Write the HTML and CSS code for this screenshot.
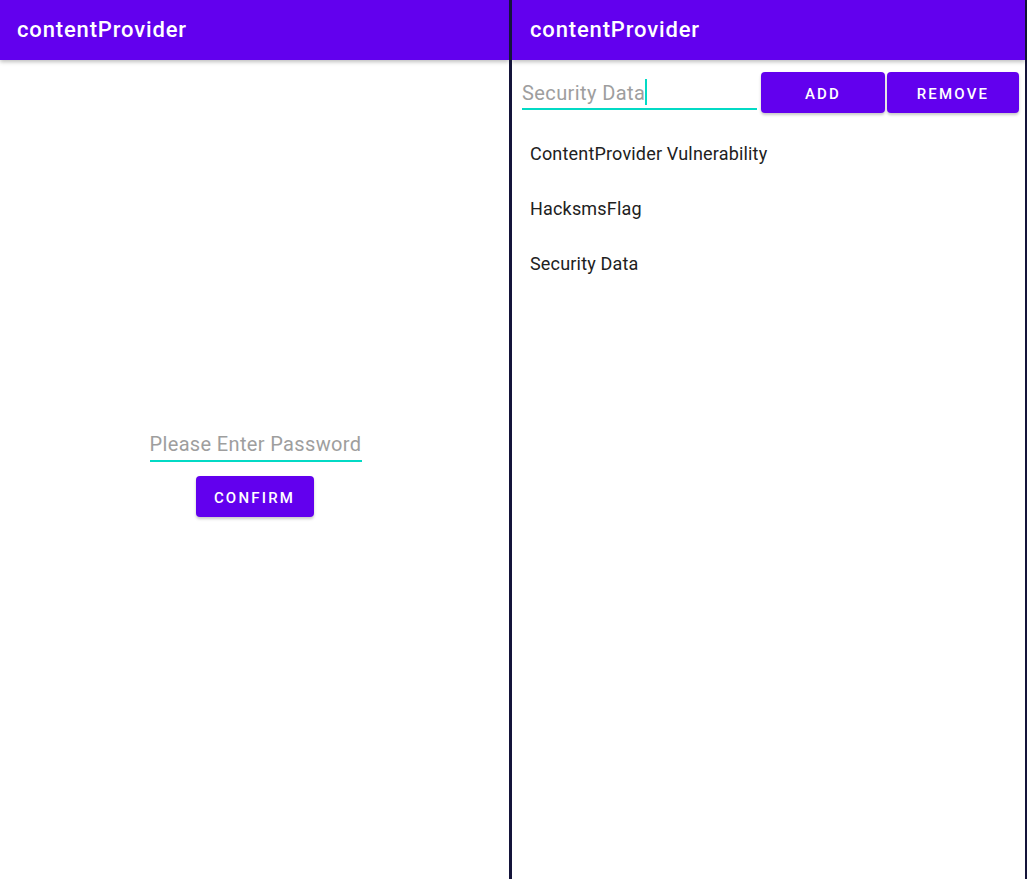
FILE: index.html
```html
<!DOCTYPE html>
<html lang="en">
<head>
  <meta charset="UTF-8" />
  <meta name="viewport" content="width=device-width, initial-scale=1" />
  <title>contentProvider</title>
  <link rel="stylesheet" href="styles.css">
</head>
<body>

<div class="screens">
  <section class="screen login">
    <header class="appbar">
      <h1>contentProvider</h1>
    </header>
    <main class="login-body">
      <div class="field password-field">
        <input type="password" placeholder="Please Enter Password">
      </div>
      <button class="btn confirm-btn">Confirm</button>
    </main>
  </section>

  <div class="divider"></div>

  <section class="screen data">
    <header class="appbar">
      <h1>contentProvider</h1>
    </header>
    <main class="data-body">
      <div class="toolbar">
        <div class="field data-field">
          <span class="hint">Security Data</span><span class="caret"></span>
        </div>
        <button class="btn add-btn">Add</button>
        <button class="btn remove-btn">Remove</button>
      </div>
      <ul class="records">
        <li>ContentProvider Vulnerability</li>
        <li>HacksmsFlag</li>
        <li>Security Data</li>
      </ul>
    </main>
  </section>
</div>

</body>
</html>
```

FILE: styles.css
```css
html, body {
  margin: 0;
  height: 100%;
}

body {
  font-family: Roboto, 'Noto Sans', sans-serif;
  background-color: white;
  color: #212121;
  overflow: hidden;
}

.screens {
  display: flex;
  height: 879px;
  border-right: 2px solid #14143a;
  box-sizing: border-box;
}

.screen {
  display: flex;
  flex-direction: column;
  min-width: 0;
}

.login {
  width: 509px;
}

.data {
  flex: 1;
}

.divider {
  width: 3px;
  background-color: #14143a;
  position: relative;
  z-index: 3;
}

.appbar {
  height: 60px;
  background-color: #6200ee;
  color: white;
  display: flex;
  align-items: center;
  padding-left: 17px;
  box-shadow: 0 2px 4px rgba(0, 0, 0, 0.25);
  position: relative;
  z-index: 2;
}

.data .appbar {
  padding-left: 18px;
}

.appbar h1 {
  margin: 0;
  font-size: 22px;
  font-weight: 500;
  letter-spacing: 0.85px;
  padding-bottom: 1px;
}

/* buttons */
.btn {
  background-color: #6200ee;
  color: white;
  border: none;
  border-radius: 4px;
  font-family: Roboto, sans-serif;
  font-weight: 500;
  font-size: 15px;
  letter-spacing: 2.2px;
  text-transform: uppercase;
  height: 41px;
  padding: 2px 0 0;
  box-shadow: 0 2px 3px rgba(0, 0, 0, 0.22);
  cursor: pointer;
}

/* login screen */
.login-body {
  flex: 1;
  display: flex;
  flex-direction: column;
  align-items: center;
  padding-top: 372px;
}

.field {
  border-bottom: 2px solid #03dac5;
}

.password-field {
  width: 212px;
  margin-left: 2px;
}

.password-field input {
  border: none;
  outline: none;
  width: 100%;
  padding: 0 0 4px;
  font-family: Roboto, sans-serif;
  font-size: 20px;
  letter-spacing: 0.35px;
  background: transparent;
}

.password-field input::placeholder {
  color: #9e9e9e;
}

.confirm-btn {
  width: 118px;
  margin-top: 14px;
}

/* data screen */
.data-body {
  flex: 1;
}

.toolbar {
  display: flex;
  align-items: flex-start;
  padding: 12px 0 0 10px;
}

.data-field {
  width: 235px;
  height: 36px;
  display: flex;
  align-items: flex-end;
  margin-right: 4px;
}

.hint {
  font-size: 20px;
  letter-spacing: 0.4px;
  color: #9e9e9e;
  padding-bottom: 3px;
}

.caret {
  width: 2px;
  height: 26px;
  background-color: #03dac5;
  margin-bottom: 3px;
}

.add-btn {
  width: 124px;
  padding-top: 3px;
}

.remove-btn {
  width: 132px;
  margin-left: 2px;
  padding-top: 3px;
}

.records {
  list-style: none;
  margin: 13px 0 0;
  padding: 0;
}

.records li {
  height: 55px;
  line-height: 55px;
  padding-left: 18px;
  font-size: 18px;
  letter-spacing: 0.18px;
  color: #212121;
}
```
